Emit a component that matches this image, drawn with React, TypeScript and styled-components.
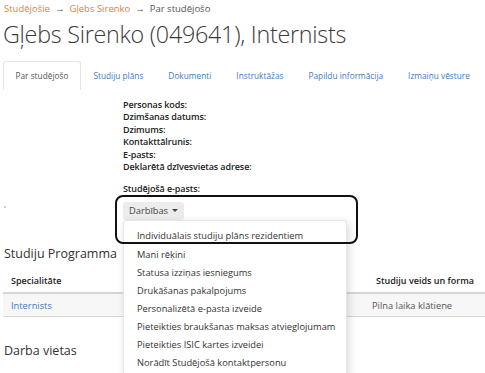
import React from "react";
import styled, { createGlobalStyle } from "styled-components";

const Global = createGlobalStyle`
  html, body { margin: 0; padding: 0; background: #fff; }
  body { font-family: "Open Sans", "Noto Sans", sans-serif; color: #333; overflow: hidden; }
  * { box-sizing: border-box; }
`;

const Page = styled.div`
  width: 485px;
  height: 373px;
  padding: 0 3px;
  position: relative;
  overflow: hidden;
`;

const Breadcrumb = styled.div`
  display: flex;
  gap: 5px;
  align-items: center;
  height: 15px;
  padding-left: 1px;
  padding-top: 1px;
  font-size: 9.5px;
  color: #555;
`;

const Crumb = styled.span<{ $link?: boolean }>`
  color: ${(p) => (p.$link ? "#e0823f" : "#555")};
`;

const Title = styled.h1`
  margin: 2px 0 0 0;
  font-size: 23.3px;
  font-weight: 300;
  color: #3a3a3a;
  line-height: 35px;
  letter-spacing: -0.25px;
  white-space: nowrap;
`;

const Tabs = styled.div`
  display: flex;
  margin-top: 9px;
  border-bottom: 1px solid #e4e4e4;
  height: 29px;
`;

const Tab = styled.div<{ $active?: boolean }>`
  font-size: 8.3px;
  padding: 0 11.5px;
  display: flex;
  align-items: center;
  white-space: nowrap;
  margin-bottom: -1px;
  color: ${(p) => (p.$active ? "#555" : "#3b7cc2")};
  border: 1px solid ${(p) => (p.$active ? "#e4e4e4" : "transparent")};
  border-bottom-color: ${(p) => (p.$active ? "#fff" : "transparent")};
  border-radius: 3px 3px 0 0;
  background: #fff;
`;

const Info = styled.div`
  padding-left: 120px;
  padding-top: 9px;
  font-size: 9px;
  font-weight: 600;
  letter-spacing: -0.1px;
  color: #222;
`;

const Label = styled.div`
  line-height: 12.4px;
`;

const EmailLabel = styled.div`
  margin-top: 10px;
  line-height: 12px;
`;

const Actions = styled.div`
  position: relative;
  padding-left: 120px;
  margin-top: 2px;
  height: 18px;
`;

const Dot = styled.span`
  position: absolute;
  left: 1px;
  top: 9px;
  width: 2px;
  height: 2px;
  background: #ccc;
`;

const DropButton = styled.div`
  display: inline-flex;
  align-items: center;
  gap: 4px;
  height: 18px;
  padding: 0 6px;
  font-size: 9.3px;
  color: #444;
  background: #ececec;
  border-radius: 3px;
`;

const Caret = styled.span`
  width: 0;
  height: 0;
  border-left: 3px solid transparent;
  border-right: 3px solid transparent;
  border-top: 3px solid #444;
`;

const Menu = styled.div`
  position: absolute;
  left: 120px;
  top: 23px;
  width: 224px;
  background: #fff;
  border: 1px solid #e6e6e6;
  border-radius: 3px;
  box-shadow: 2px 3px 8px rgba(0, 0, 0, 0.15);
  padding: 6px 0;
  z-index: 5;
`;

const MenuItem = styled.div`
  font-size: 9.3px;
  color: #333;
  height: 18.1px;
  line-height: 18px;
  padding-left: 13px;
  white-space: nowrap;
`;

const Annotation = styled.div`
  position: absolute;
  left: 112px;
  top: -2px;
  width: 243px;
  height: 49px;
  border: 2px solid #111;
  border-radius: 8px;
  z-index: 6;
  pointer-events: none;
`;

const Heading = styled.h2<{ $top: number }>`
  margin: ${(p) => p.$top}px 0 0 0;
  padding-left: 1px;
  font-size: 12.5px;
  font-weight: 400;
  color: #333;
  line-height: 20px;
  white-space: nowrap;
`;

const Table = styled.div`
  margin-top: 4px;
  width: 482px;
`;

const Row = styled.div<{ $head?: boolean }>`
  display: grid;
  grid-template-columns: 361px 1fr;
  height: ${(p) => (p.$head ? "26px" : "23px")};
  align-items: center;
  font-size: ${(p) => (p.$head ? "9px" : "9.3px")};
  background: ${(p) => (p.$head ? "#fff" : "#f7f7f7")};
  border-bottom: ${(p) => (p.$head ? "2px solid #d6d6d6" : "1px solid #d6d6d6")};
  font-weight: ${(p) => (p.$head ? 600 : 400)};
  color: ${(p) => (p.$head ? "#222" : "#555")};
  white-space: nowrap;
`;

const Cell = styled.div<{ $link?: boolean; $shift?: number }>`
  padding-left: ${(p) => 8 + (p.$shift || 0)}px;
  color: ${(p) => (p.$link ? "#3b7cc2" : "inherit")};
`;

const labels = [
  "Personas kods:",
  "Dzimšanas datums:",
  "Dzimums:",
  "Kontakttālrunis:",
  "E-pasts:",
  "Deklarētā dzīvesvietas adrese:",
];

const items = [
  "Individuālais studiju plāns rezidentiem",
  "Mani rēķini",
  "Statusa izziņas iesniegums",
  "Drukāšanas pakalpojums",
  "Personalizētā e-pasta izveide",
  "Pieteikties braukšanas maksas atvieglojumam",
  "Pieteikties ISIC kartes izveidei",
  "Norādīt Studējošā kontaktpersonu",
];

const tabs = [
  "Par studējošo",
  "Studiju plāns",
  "Dokumenti",
  "Instruktāžas",
  "Papildu informācija",
  "Izmaiņu vēsture",
];

export default function App() {
  return (
    <Page>
      <Global />
      <Breadcrumb>
        <Crumb $link>Studējošie</Crumb>
        <Crumb>→</Crumb>
        <Crumb $link>Gļebs Sirenko</Crumb>
        <Crumb>→</Crumb>
        <Crumb>Par studējošo</Crumb>
      </Breadcrumb>
      <Title>Gļebs Sirenko (049641), Internists</Title>
      <Tabs>
        {tabs.map((t, i) => (
          <Tab key={t} $active={i === 0}>
            {t}
          </Tab>
        ))}
      </Tabs>
      <Info>
        {labels.map((l) => (
          <Label key={l}>{l}</Label>
        ))}
        <EmailLabel>Studējošā e-pasts:</EmailLabel>
      </Info>
      <Actions>
        <Dot />
        <DropButton>
          Darbības <Caret />
        </DropButton>
        <Menu>
          {items.map((it) => (
            <MenuItem key={it}>{it}</MenuItem>
          ))}
        </Menu>
        <Annotation />
      </Actions>
      <Heading $top={29}>Studiju Programma</Heading>
      <Table>
        <Row $head>
          <Cell>Specialitāte</Cell>
          <Cell $shift={4}>Studiju veids un forma</Cell>
        </Row>
        <Row>
          <Cell $link>Internists</Cell>
          <Cell>Pilna laika klātiene</Cell>
        </Row>
      </Table>
      <Heading $top={24}>Darba vietas</Heading>
    </Page>
  );
}
